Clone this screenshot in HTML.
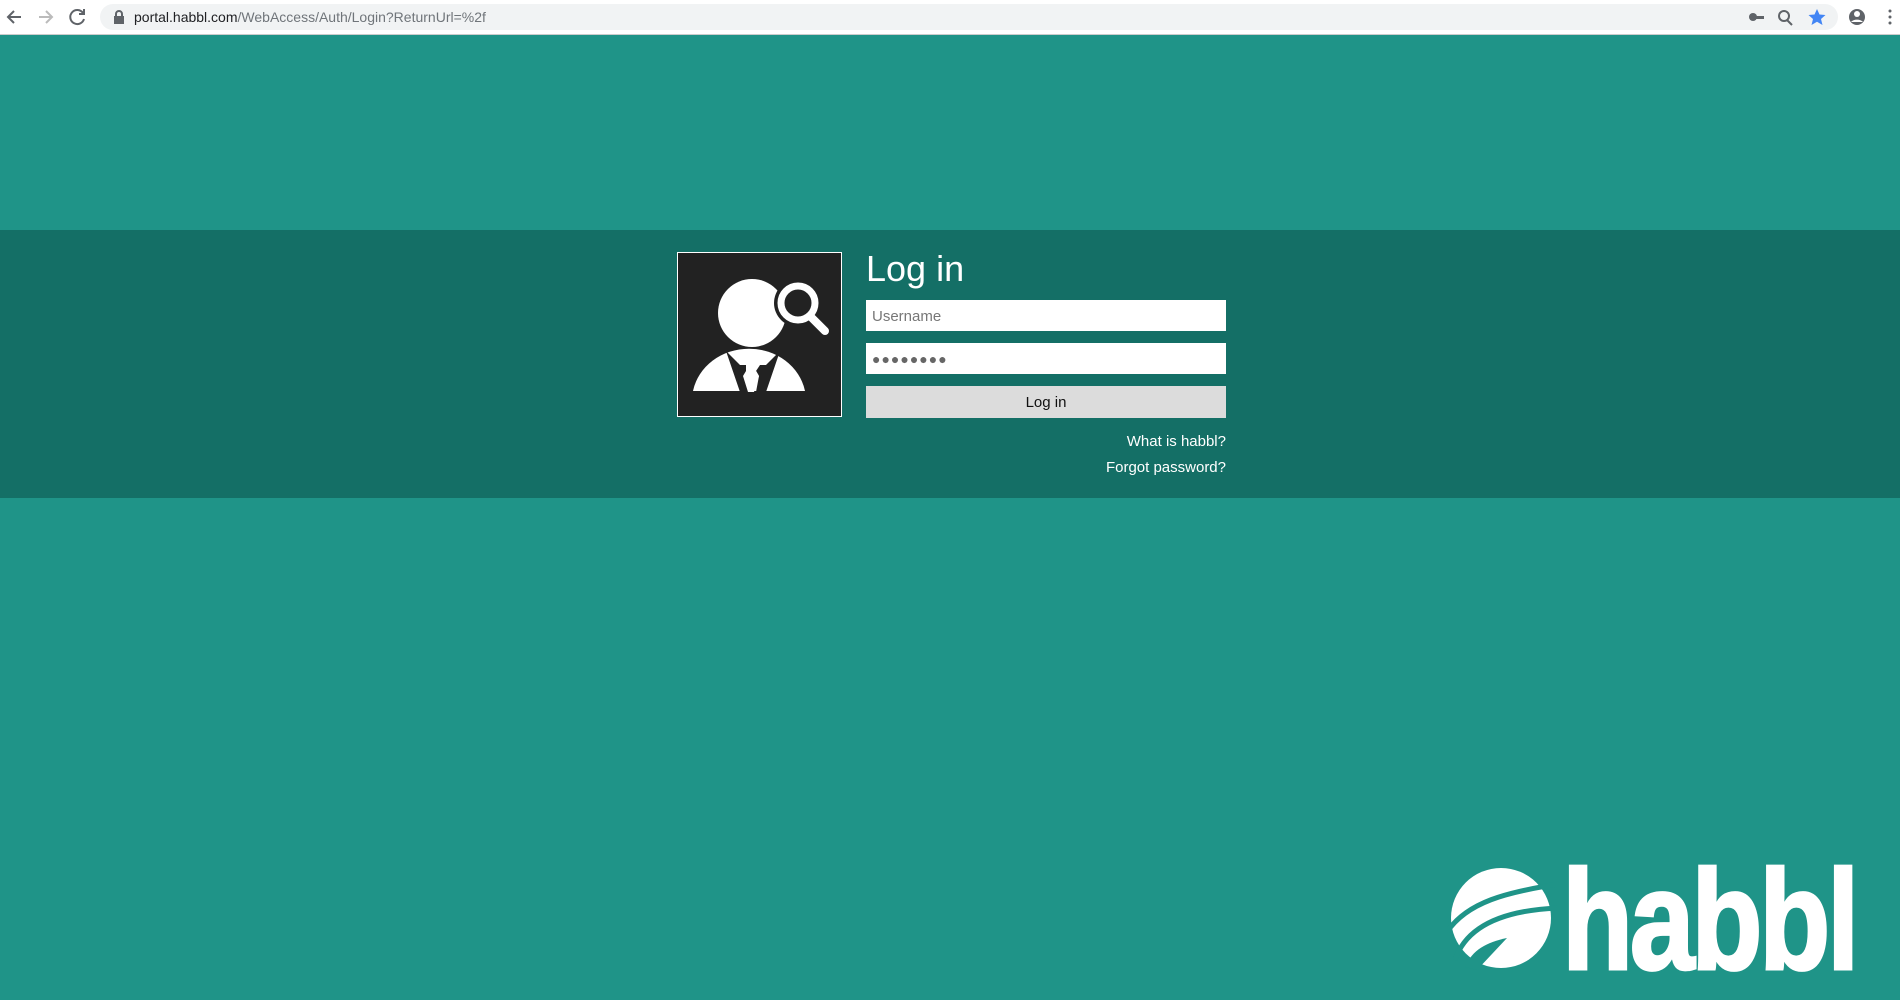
<!DOCTYPE html>
<html><head><meta charset="utf-8"><style>
*{margin:0;padding:0;box-sizing:border-box}
body{width:1900px;height:986px;background:#1f9488;font-family:"Liberation Sans",sans-serif;position:relative;overflow:hidden}
.bar{position:absolute;left:0;top:0;width:1900px;height:35px;background:#fff;border-bottom:1px solid #ccc}
.url{position:absolute;left:100px;top:4px;width:1738px;height:26px;border-radius:13px;background:#f1f3f4}
.url span{position:absolute;left:34px;top:5px;font-size:14px;color:#202124}
.url span i{font-style:normal;color:#70757a}
.band{position:absolute;left:0;top:230px;width:1900px;height:268px;background:#146f66}
.icon{position:absolute;left:677px;top:252px;width:165px;height:165px;background:#222;border:1px solid #fff}
h1{position:absolute;left:866px;top:248px;font-weight:normal;font-size:36px;color:#fff}
.inp{position:absolute;left:866px;width:360px;height:31px;background:#fff;font-size:15px;color:#777;padding:8px 6px}
.btn{position:absolute;left:866px;top:386px;width:360px;height:32px;background:#dcdcdc;font-size:15px;color:#111;text-align:center;line-height:34px}
.lnk{position:absolute;right:674px;font-size:15px;color:#fff}
</style></head><body>
<div class="bar">
<svg width="90" height="35" style="position:absolute;left:0;top:0"><g stroke="#5f6368" stroke-width="2" fill="none"><path d="M21 17H8M14 11l-6 6 6 6"/><path d="M39 17h13M46 11l6 6-6 6" stroke="#bbb"/><path d="M83 13a7 7 0 1 0 1 6"/><path d="M84 9v5h-5"/></g></svg>
<div class="url"><svg width="12" height="14" style="position:absolute;left:13px;top:6px"><rect x="1" y="6" width="10" height="8" fill="#5f6368"/><path d="M3 7V4a3 3 0 0 1 6 0v3" stroke="#5f6368" stroke-width="2" fill="none"/></svg><span>portal.habbl.com<i>/WebAccess/Auth/Login?ReturnUrl=%2f</i></span></div>
<svg width="150" height="35" style="position:absolute;left:1745px;top:0"><g fill="#5f6368"><circle cx="8" cy="17" r="4"/><rect x="10" y="16" width="9" height="3"/><circle cx="39" cy="16" r="5" fill="none" stroke="#5f6368" stroke-width="2"/><path d="M42 20l5 5" stroke="#5f6368" stroke-width="2"/><path d="M72 9l2.5 5.5 6 .5-4.5 4 1.5 6-5.5-3.2-5.5 3.2 1.5-6-4.5-4 6-.5z" fill="#4285f4"/><circle cx="112" cy="17" r="8"/><circle cx="145" cy="11" r="1.5"/><circle cx="145" cy="17" r="1.5"/><circle cx="145" cy="23" r="1.5"/></g><circle cx="112" cy="14" r="3" fill="#fff"/><path d="M106 22a7 5 0 0 1 12 0" fill="#fff"/></svg>
</div>
<div class="band"></div>
<div class="icon"><svg width="163" height="163" viewBox="0 0 163 163">
<circle cx="74" cy="60" r="34" fill="#fff"/>
<circle cx="120" cy="50" r="24" fill="#222"/>
<circle cx="120" cy="50" r="17" fill="none" stroke="#fff" stroke-width="7"/>
<path d="M132 63l15 15" stroke="#fff" stroke-width="8" stroke-linecap="round"/>
<path d="M15 138a57 52 0 0 1 112 0z" fill="#fff"/>
<path d="M48 98l14 41h10l-3-16 4-7-3-4h-8z" fill="#222"/>
<path d="M102 98l-14 41h-10l3-16-4-7 3-4h8z" fill="#222"/>
<path d="M68 112h14l-4 6 3 5-5 16h-6l-5-16 3-5z" fill="#fff"/>
</svg></div>
<h1>Log in</h1>
<div class="inp" style="top:300px">Username</div>
<div class="inp" style="top:343px;color:#666;font-size:14px;letter-spacing:1px">●●●●●●●●</div>
<div class="btn">Log in</div>
<div class="lnk" style="top:433px">What is habbl?</div>
<div class="lnk" style="top:459px">Forgot password?</div>
<svg width="110" height="110" style="position:absolute;left:1447px;top:862px" viewBox="0 0 110 110">
<circle cx="54" cy="56" r="50" fill="#fff"/>
<path d="M0 70C20 40 60 30 112 22" stroke="#1f9488" stroke-width="5" fill="none"/>
<path d="M8 98C20 62 60 48 112 46" stroke="#1f9488" stroke-width="5" fill="none"/>
<path d="M18 105C25 88 40 80 60 76L30 108z" fill="#1f9488"/>
</svg>
<div style="position:absolute;left:1562px;top:850px;font-size:142px;font-weight:bold;color:#fff;transform:scaleX(0.82);transform-origin:0 0;letter-spacing:-4px;line-height:142px;-webkit-text-stroke:3px #fff">habbl</div>
</body></html>
